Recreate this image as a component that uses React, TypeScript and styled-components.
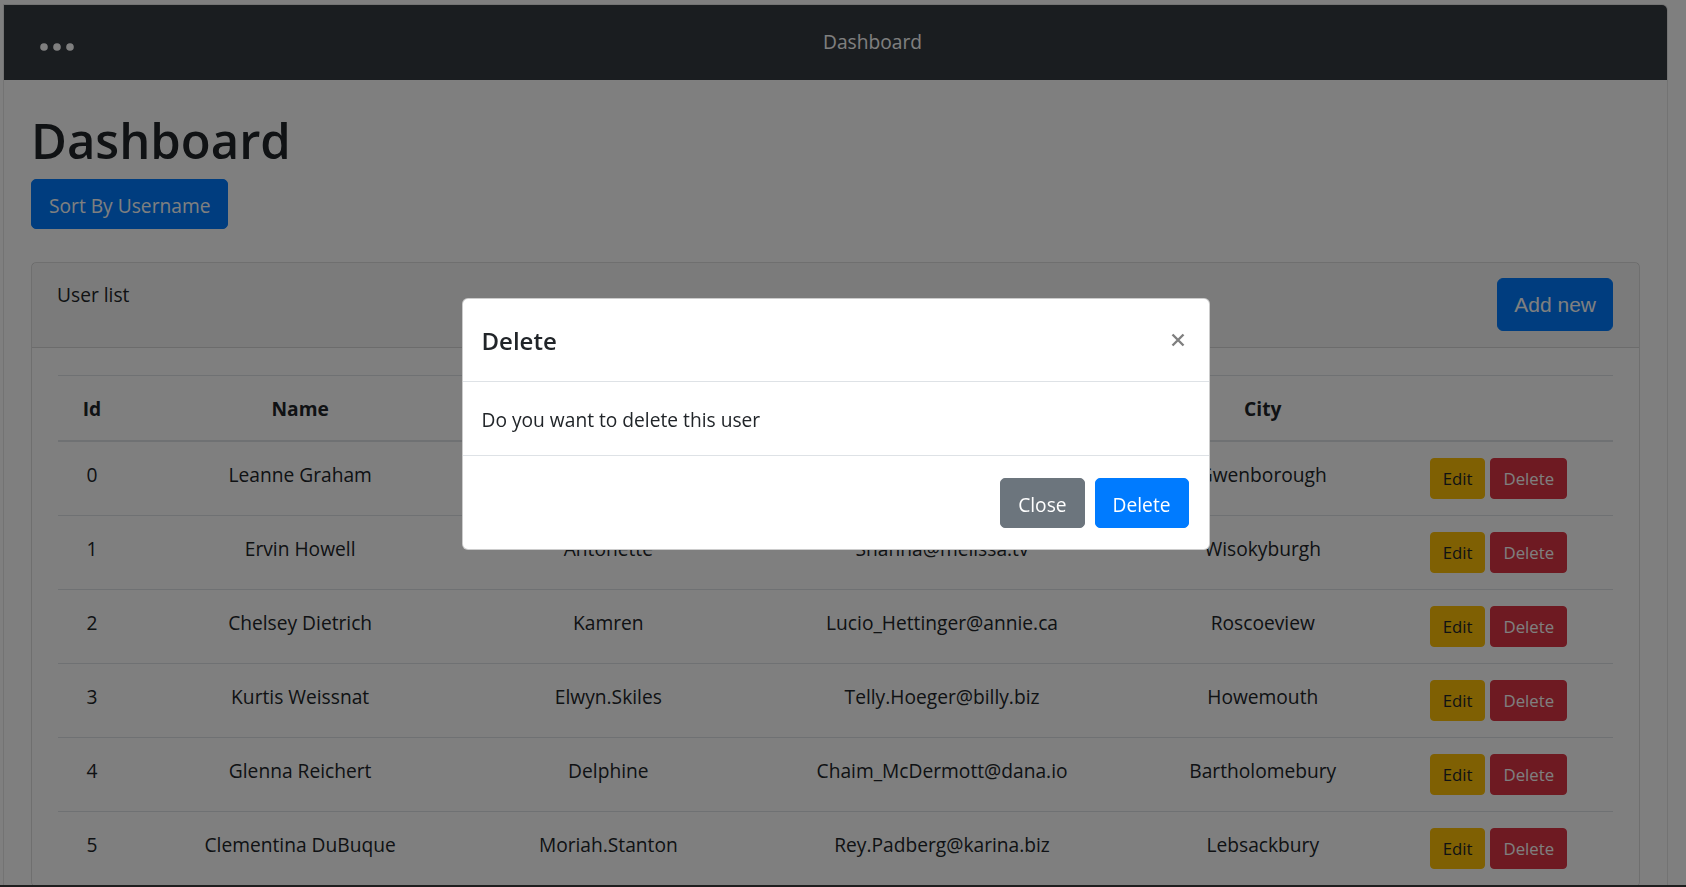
import styled, { createGlobalStyle } from "styled-components";

type Tone = "primary" | "secondary" | "warning" | "danger";

type User = {
  id: number;
  name: string;
  username: string;
  email: string;
  city: string;
};

const users: User[] = [
  { id: 0, name: "Leanne Graham", username: "Bret", email: "Sincere@april.biz", city: "Gwenborough" },
  { id: 1, name: "Ervin Howell", username: "Antonette", email: "Shanna@melissa.tv", city: "Wisokyburgh" },
  { id: 2, name: "Chelsey Dietrich", username: "Kamren", email: "Lucio_Hettinger@annie.ca", city: "Roscoeview" },
  { id: 3, name: "Kurtis Weissnat", username: "Elwyn.Skiles", email: "Telly.Hoeger@billy.biz", city: "Howemouth" },
  { id: 4, name: "Glenna Reichert", username: "Delphine", email: "Chaim_McDermott@dana.io", city: "Bartholomebury" },
  { id: 5, name: "Clementina DuBuque", username: "Moriah.Stanton", email: "Rey.Padberg@karina.biz", city: "Lebsackbury" },
];

const columns = [
  { label: "Id", width: 68 },
  { label: "Name", width: 348 },
  { label: "Username", width: 268 },
  { label: "Email", width: 399 },
  { label: "City", width: 242 },
  { label: "", width: 229 },
];

const toneColors: Record<Tone, { bg: string; fg: string }> = {
  primary: { bg: "#007bff", fg: "#fff" },
  secondary: { bg: "#6c757d", fg: "#fff" },
  warning: { bg: "#ffc107", fg: "#212529" },
  danger: { bg: "#dc3545", fg: "#fff" },
};

const GlobalStyle = createGlobalStyle`
  * {
    box-sizing: border-box;
  }
  html,
  body {
    margin: 0;
    padding: 0;
  }
  body {
    background: #fff;
    color: #212529;
    font-family: "Open Sans", "Liberation Sans", sans-serif;
    font-size: 19.2px;
    line-height: 30px;
    overflow: hidden;
  }
`;

const Screen = styled.div`
  width: 1686px;
  height: 887px;
  padding: 4px 18px 0 3px;
  display: flex;
  flex-direction: column;
`;

const BrowserWindow = styled.div`
  flex: 1;
  min-height: 0;
  border: 1px solid #e6e6e6;
  border-bottom: none;
  border-top-right-radius: 6px;
  overflow: hidden;
  background: #fff;
`;

const Taskbar = styled.div`
  height: 2px;
  margin: 0 -18px 0 -3px;
  background: #3c3c3c;
`;

const Navbar = styled.nav`
  display: flex;
  align-items: center;
  height: 75px;
  background: #343a40;
`;

const MenuButton = styled.button`
  display: flex;
  width: 74px;
  padding: 9px 0 0 36px;
  border: 0;
  background: none;
`;

const Brand = styled.span`
  flex: 1;
  margin-top: -1px;
  text-align: center;
  color: #fff;
  font-size: 19.2px;
`;

const Main = styled.main`
  padding: 30px 27px 0;
`;

const PageTitle = styled.h1`
  margin: 0 0 9px;
  font-size: 49px;
  line-height: 60px;
  font-weight: 600;
`;

const Button = styled.button<{ $tone: Tone; $small?: boolean }>`
  display: inline-flex;
  align-items: center;
  justify-content: center;
  height: ${(props) => (props.$small ? "41px" : "50px")};
  padding: ${(props) => (props.$small ? "2px 12px 0" : "3px 17px 0")};
  border: 1px solid ${(props) => toneColors[props.$tone].bg};
  border-radius: ${(props) => (props.$small ? "4px" : "5px")};
  background: ${(props) => toneColors[props.$tone].bg};
  color: ${(props) => toneColors[props.$tone].fg};
  font-family: inherit;
  font-size: ${(props) => (props.$small ? "16.8px" : "19.2px")};
  line-height: 1;
  cursor: pointer;
`;

const AddButton = styled.button`
  height: 53px;
  padding: 0 16px;
  border: 1px solid #007bff;
  border-radius: 6px;
  background: #007bff;
  color: #fff;
  font-family: "Liberation Sans", Arial, sans-serif;
  font-size: 21px;
  cursor: pointer;
`;

const Card = styled.section`
  margin-top: 33px;
  border: 1px solid rgba(0, 0, 0, 0.125);
  border-radius: 5px;
`;

const CardHeader = styled.header`
  display: flex;
  justify-content: space-between;
  align-items: flex-start;
  padding: 15px 26px 16px 25px;
  border-bottom: 1px solid rgba(0, 0, 0, 0.125);
  background: rgba(0, 0, 0, 0.03);
`;

const CardLabel = styled.span`
  padding-top: 2px;
`;

const CardBody = styled.div`
  padding: 27px 26px 0;
`;

const Table = styled.table`
  width: 100%;
  border-collapse: separate;
  border-spacing: 0;
  table-layout: fixed;
`;

const HeadCell = styled.th`
  padding: 18px 8px 16px;
  border-top: 1px solid #dee2e6;
  border-bottom: 2px solid #dee2e6;
  font-weight: 700;
  text-align: center;
  line-height: 30px;
`;

const Cell = styled.td`
  padding: 18px 8px 14px;
  border-bottom: 1px solid #dee2e6;
  text-align: center;
  vertical-align: top;
  line-height: 30px;
  white-space: nowrap;
`;

const ActionCell = styled(Cell)`
  padding: 16px 8px;
`;

const ActionGroup = styled.div`
  display: flex;
  justify-content: center;
  gap: 5px;
`;

const Backdrop = styled.div`
  position: fixed;
  inset: 0;
  display: flex;
  justify-content: center;
  align-items: flex-start;
  padding: 298px 19px 0 4px;
  background: rgba(0, 0, 0, 0.5);
`;

const Dialog = styled.div`
  width: 748px;
  border: 1px solid rgba(0, 0, 0, 0.2);
  border-radius: 6px;
  background: #fff;
`;

const DialogHeader = styled.div`
  display: flex;
  justify-content: space-between;
  align-items: flex-start;
  padding: 23px 20px 21px 19px;
  border-bottom: 1px solid #dee2e6;
`;

const DialogTitle = styled.h5`
  margin: 0;
  font-size: 24px;
  line-height: 38px;
  font-weight: 600;
`;

const CloseX = styled.button`
  display: flex;
  margin: 11px 4px 0 0;
  padding: 0;
  border: 0;
  background: none;
  cursor: pointer;
`;

const DialogBody = styled.div`
  padding: 23px 20px 20px 19px;
  border-bottom: 1px solid #dee2e6;
`;

const DialogFooter = styled.div`
  display: flex;
  justify-content: flex-end;
  gap: 10px;
  padding: 22px 20px 21px;
`;

function Dots() {
  return (
    <svg width="34" height="8" viewBox="0 0 34 8">
      <circle cx="4" cy="4" r="3.8" fill="#fff" />
      <circle cx="17" cy="4" r="3.8" fill="#fff" />
      <circle cx="30" cy="4" r="3.8" fill="#fff" />
    </svg>
  );
}

export default function App() {
  return (
    <>
      <GlobalStyle />
      <Screen>
        <BrowserWindow>
          <Navbar>
            <MenuButton aria-label="menu">
              <Dots />
            </MenuButton>
            <Brand>Dashboard</Brand>
          </Navbar>
          <Main>
            <PageTitle>Dashboard</PageTitle>
            <Button $tone="primary">Sort By Username</Button>
            <Card>
              <CardHeader>
                <CardLabel>User list</CardLabel>
                <AddButton>Add new</AddButton>
              </CardHeader>
              <CardBody>
                <Table>
                  <colgroup>
                    {columns.map((col, i) => (
                      <col key={i} style={{ width: col.width }} />
                    ))}
                  </colgroup>
                  <thead>
                    <tr>
                      {columns.map((col, i) => (
                        <HeadCell key={i}>{col.label}</HeadCell>
                      ))}
                    </tr>
                  </thead>
                  <tbody>
                    {users.map((user) => (
                      <tr key={user.id}>
                        <Cell>{user.id}</Cell>
                        <Cell>{user.name}</Cell>
                        <Cell>{user.username}</Cell>
                        <Cell>{user.email}</Cell>
                        <Cell>{user.city}</Cell>
                        <ActionCell>
                          <ActionGroup>
                            <Button $tone="warning" $small>
                              Edit
                            </Button>
                            <Button $tone="danger" $small>
                              Delete
                            </Button>
                          </ActionGroup>
                        </ActionCell>
                      </tr>
                    ))}
                  </tbody>
                </Table>
              </CardBody>
            </Card>
          </Main>
        </BrowserWindow>
        <Taskbar />
      </Screen>
      <Backdrop>
        <Dialog role="dialog">
          <DialogHeader>
            <DialogTitle>Delete</DialogTitle>
            <CloseX aria-label="close">
              <svg width="14" height="14" viewBox="0 0 14 14">
                <path
                  d="M1.5 1.5 L12.5 12.5 M12.5 1.5 L1.5 12.5"
                  stroke="#000"
                  strokeOpacity="0.5"
                  strokeWidth="2.4"
                />
              </svg>
            </CloseX>
          </DialogHeader>
          <DialogBody>Do you want to delete this user</DialogBody>
          <DialogFooter>
            <Button $tone="secondary">Close</Button>
            <Button $tone="primary">Delete</Button>
          </DialogFooter>
        </Dialog>
      </Backdrop>
    </>
  );
}
